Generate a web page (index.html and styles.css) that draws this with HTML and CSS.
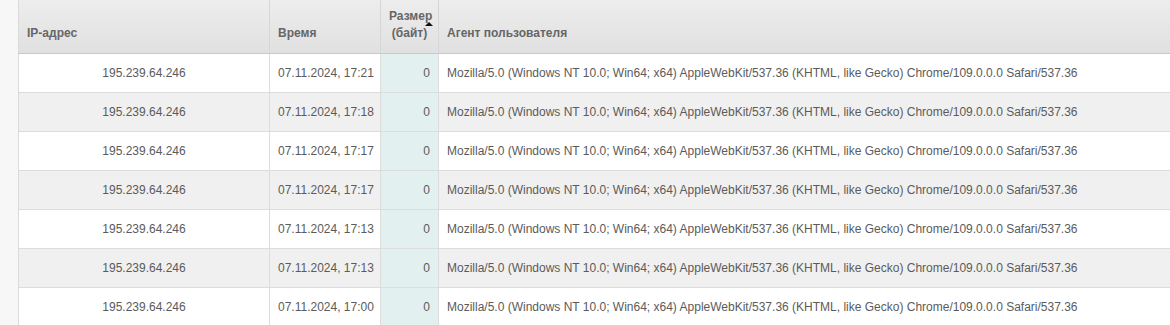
FILE: index.html
```html
<!DOCTYPE html>
<html lang="ru">
<head>
<meta charset="utf-8">
<link rel="stylesheet" href="styles.css">
</head>
<body>
<div class="wrap">
<table class="log">
  <colgroup>
    <col class="c-ip"><col class="c-time"><col class="c-size"><col class="c-agent">
  </colgroup>
  <thead>
    <tr>
      <th class="h-left">IP-адрес</th>
      <th class="h-left">Время</th>
      <th class="h-center sorted">Размер<br>(байт)<span class="arrow"></span></th>
      <th class="h-left">Агент пользователя</th>
    </tr>
  </thead>
  <tbody>
    <tr><td class="ip">195.239.64.246</td><td class="time">07.11.2024, 17:21</td><td class="size">0</td><td class="agent">Mozilla/5.0 (Windows NT 10.0; Win64; x64) AppleWebKit/537.36 (KHTML, like Gecko) Chrome/109.0.0.0 Safari/537.36</td></tr>
    <tr><td class="ip">195.239.64.246</td><td class="time">07.11.2024, 17:18</td><td class="size">0</td><td class="agent">Mozilla/5.0 (Windows NT 10.0; Win64; x64) AppleWebKit/537.36 (KHTML, like Gecko) Chrome/109.0.0.0 Safari/537.36</td></tr>
    <tr><td class="ip">195.239.64.246</td><td class="time">07.11.2024, 17:17</td><td class="size">0</td><td class="agent">Mozilla/5.0 (Windows NT 10.0; Win64; x64) AppleWebKit/537.36 (KHTML, like Gecko) Chrome/109.0.0.0 Safari/537.36</td></tr>
    <tr><td class="ip">195.239.64.246</td><td class="time">07.11.2024, 17:17</td><td class="size">0</td><td class="agent">Mozilla/5.0 (Windows NT 10.0; Win64; x64) AppleWebKit/537.36 (KHTML, like Gecko) Chrome/109.0.0.0 Safari/537.36</td></tr>
    <tr><td class="ip">195.239.64.246</td><td class="time">07.11.2024, 17:13</td><td class="size">0</td><td class="agent">Mozilla/5.0 (Windows NT 10.0; Win64; x64) AppleWebKit/537.36 (KHTML, like Gecko) Chrome/109.0.0.0 Safari/537.36</td></tr>
    <tr><td class="ip">195.239.64.246</td><td class="time">07.11.2024, 17:13</td><td class="size">0</td><td class="agent">Mozilla/5.0 (Windows NT 10.0; Win64; x64) AppleWebKit/537.36 (KHTML, like Gecko) Chrome/109.0.0.0 Safari/537.36</td></tr>
    <tr><td class="ip">195.239.64.246</td><td class="time">07.11.2024, 17:00</td><td class="size">0</td><td class="agent">Mozilla/5.0 (Windows NT 10.0; Win64; x64) AppleWebKit/537.36 (KHTML, like Gecko) Chrome/109.0.0.0 Safari/537.36</td></tr>
  </tbody>
</table>
</div>
</body>
</html>
```
FILE: styles.css
```css
html, body {
  margin: 0;
  padding: 0;
  background: #f7f7f7;
  overflow: hidden;
}
.wrap {
  padding-left: 18px;
  width: 1200px;
}
.log {
  border-collapse: collapse;
  table-layout: fixed;
  width: 1182px;
  font-family: "Liberation Sans", Arial, sans-serif;
  font-size: 12px;
  color: #5b5b5b;
  background: #fff;
  border-left: 1px solid #dadada;
}
.c-ip { width: 251px; }
.c-time { width: 111px; }
.c-size { width: 58px; }
.c-agent { width: auto; }

.log th {
  height: 53px;
  padding: 0 8px 11px;
  box-sizing: border-box;
  vertical-align: bottom;
  font-weight: bold;
  color: #666;
  line-height: 17px;
  background: linear-gradient(#ededed, #e0e0e0);
  border-left: 1px solid #d6d6d6;
  border-bottom: 1px solid #c9c9c9;
}
.log th:first-child { border-left: none; }
.h-left { text-align: left; }
.h-center { text-align: center; }
.sorted { position: relative; padding-left: 4px; padding-right: 4px; }
.arrow {
  position: absolute;
  right: 5px;
  top: 22px;
  width: 0;
  height: 0;
  border-left: 4px solid transparent;
  border-right: 4px solid transparent;
  border-bottom: 4px solid #111;
}

.log td {
  height: 39px;
  padding: 0 8px;
  box-sizing: border-box;
  border-left: 1px solid #dcdcdc;
  border-bottom: 1px solid #dcdcdc;
  white-space: nowrap;
  vertical-align: middle;
}
.log td:first-child { border-left: none; }
.log tbody tr:nth-child(even) td { background: #f0f0f0; }
.log tbody tr td.size { background: #e2f0f0; text-align: right; }
.ip { text-align: center; }
.time { text-align: left; }
.agent { text-align: left; }
```
